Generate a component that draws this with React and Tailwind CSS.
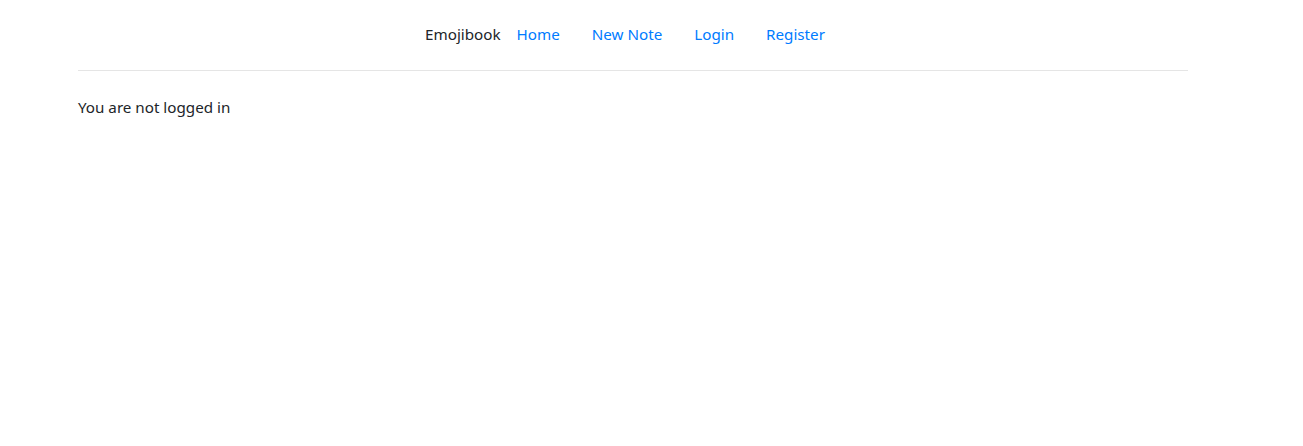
import React from 'react';

const LINKS = ["Home", "New Note", "Login", "Register"];

export default function App() {
    return (
        <div className="min-h-screen bg-white text-[#212529] text-[15.2px] leading-6" style={{ fontFamily: '"Noto Sans", "Open Sans", sans-serif' }}>
            <div className="w-[1266px]">
                <div className="mx-auto max-w-[1140px] px-[15px]">
                    {/* Navbar */}
                    <nav className="flex justify-center items-center pt-[14px] pb-2">
                        <span className="py-2">Emojibook</span>
                        {LINKS.map(l => (
                            <a key={l} href="#" className="px-4 py-2 text-[#007bff]">{l}</a>
                        ))}
                    </nav>
                    <hr className="mt-2 border-0 border-t border-[#e5e5e5]" />
                    <p className="mt-6">You are not logged in</p>
                </div>
            </div>
        </div>
    );
}
